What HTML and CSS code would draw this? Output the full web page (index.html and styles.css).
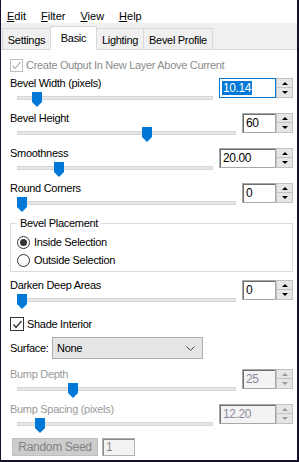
FILE: index.html
```html
<!DOCTYPE html>
<html>
<head>
<meta charset="utf-8">
<link rel="stylesheet" href="styles.css">
</head>
<body>
<div class="win">
  <div class="menubar">
    <span class="mi"><u>E</u>dit</span>
    <span class="mi"><u>F</u>ilter</span>
    <span class="mi"><u>V</u>iew</span>
    <span class="mi"><u>H</u>elp</span>
  </div>
  <div class="tabs">
    <div class="tab t-settings">Settings</div>
    <div class="tab t-basic active">Basic</div>
    <div class="tab t-lighting">Lighting</div>
    <div class="tab t-profile">Bevel Profile</div>
  </div>
  <div class="panel">
    <div class="chkrow top disabled">
      <span class="cb"><svg viewBox="0 0 11 11" width="11" height="11"><polyline points="1.5,5.5 4,8.5 9.5,2" /></svg></span>
      <span>Create Output In New Layer Above Current</span>
    </div>

    <div class="ctl wide">
      <div class="left">
        <div class="lbl">Bevel Width (pixels)</div>
        <div class="slider"><div class="track"></div><svg class="thumb" style="left:15px" viewBox="0 0 10 15" width="10" height="15"><polygon points="0,0 10,0 10,10 5,15 0,10"/></svg></div>
      </div>
      <div class="spin">
        <div class="field focus"><span class="sel">10.14</span></div>
        <div class="btns"><span class="sb"><i class="up"></i></span><span class="sb"><i class="dn"></i></span></div>
      </div>
    </div>

    <div class="ctl narrow">
      <div class="left">
        <div class="lbl">Bevel Height</div>
        <div class="slider"><div class="track"></div><svg class="thumb" style="left:125px" viewBox="0 0 10 15" width="10" height="15"><polygon points="0,0 10,0 10,10 5,15 0,10"/></svg></div>
      </div>
      <div class="spin">
        <div class="field">60</div>
        <div class="btns"><span class="sb"><i class="up"></i></span><span class="sb"><i class="dn"></i></span></div>
      </div>
    </div>

    <div class="ctl wide">
      <div class="left">
        <div class="lbl">Smoothness</div>
        <div class="slider"><div class="track"></div><svg class="thumb" style="left:37px" viewBox="0 0 10 15" width="10" height="15"><polygon points="0,0 10,0 10,10 5,15 0,10"/></svg></div>
      </div>
      <div class="spin">
        <div class="field">20.00</div>
        <div class="btns"><span class="sb"><i class="up"></i></span><span class="sb"><i class="dn"></i></span></div>
      </div>
    </div>

    <div class="ctl narrow">
      <div class="left">
        <div class="lbl">Round Corners</div>
        <div class="slider"><div class="track"></div><svg class="thumb" style="left:0px" viewBox="0 0 10 15" width="10" height="15"><polygon points="0,0 10,0 10,10 5,15 0,10"/></svg></div>
      </div>
      <div class="spin">
        <div class="field">0</div>
        <div class="btns"><span class="sb"><i class="up"></i></span><span class="sb"><i class="dn"></i></span></div>
      </div>
    </div>

    <fieldset class="group">
      <legend>Bevel Placement</legend>
      <div class="radrow"><span class="radio on"></span>Inside Selection</div>
      <div class="radrow"><span class="radio"></span>Outside Selection</div>
    </fieldset>

    <div class="ctl narrow after-group">
      <div class="left">
        <div class="lbl">Darken Deep Areas</div>
        <div class="slider"><div class="track"></div><svg class="thumb" style="left:0px" viewBox="0 0 10 15" width="10" height="15"><polygon points="0,0 10,0 10,10 5,15 0,10"/></svg></div>
      </div>
      <div class="spin">
        <div class="field">0</div>
        <div class="btns"><span class="sb"><i class="up"></i></span><span class="sb"><i class="dn"></i></span></div>
      </div>
    </div>

    <div class="chkrow shade">
      <span class="cb"><svg viewBox="0 0 11 11" width="11" height="11"><polyline points="1.5,5.5 4,8.5 9.5,2" /></svg></span>
      <span>Shade Interior</span>
    </div>

    <div class="surface">
      <span class="slbl">Surface:</span>
      <div class="dropdown"><span>None</span><svg viewBox="0 0 9 5" width="9" height="5"><polyline points="0.5,0.5 4.5,4.5 8.5,0.5"/></svg></div>
    </div>

    <div class="ctl narrow disabled after-surface">
      <div class="left">
        <div class="lbl">Bump Depth</div>
        <div class="slider"><div class="track"></div><svg class="thumb" style="left:51px" viewBox="0 0 10 15" width="10" height="15"><polygon points="0,0 10,0 10,10 5,15 0,10"/></svg></div>
      </div>
      <div class="spin">
        <div class="field">25</div>
        <div class="btns"><span class="sb"><i class="up"></i></span><span class="sb"><i class="dn"></i></span></div>
      </div>
    </div>

    <div class="ctl wide disabled">
      <div class="left">
        <div class="lbl">Bump Spacing (pixels)</div>
        <div class="slider"><div class="track"></div><svg class="thumb" style="left:18px" viewBox="0 0 10 15" width="10" height="15"><polygon points="0,0 10,0 10,10 5,15 0,10"/></svg></div>
      </div>
      <div class="spin">
        <div class="field">12.20</div>
        <div class="btns"><span class="sb"><i class="up"></i></span><span class="sb"><i class="dn"></i></span></div>
      </div>
    </div>

    <div class="seedrow">
      <div class="btn">Random Seed</div>
      <div class="seed">1</div>
    </div>
  </div>
</div>
</body>
</html>
```

FILE: styles.css
```css
html, body {
  margin: 0;
  padding: 0;
  background: #ffffff;
}
body {
  width: 299px;
  height: 462px;
  overflow: hidden;
  font-family: "Liberation Sans", Arial, sans-serif;
  font-size: 11px;
  letter-spacing: -0.3px;
  color: #000;
}
.win {
  box-sizing: border-box;
  width: 299px;
  height: 462px;
  border-left: 1px solid #16102c;
  border-right: 2px solid #16102c;
  border-bottom: 2px solid #16102c;
  display: flex;
  flex-direction: column;
  background: #fff;
}

/* menu */
.menubar {
  height: 23px;
  box-sizing: border-box;
  padding: 10px 0 0 6px;
  display: flex;
  gap: 15px;
  line-height: 13px;
  font-size: 11px;
  letter-spacing: 0;
  background: #fff;
}
.mi u { text-decoration: underline; text-underline-offset: 1px; }

/* tabs */
.tabs {
  height: 26px;
  background: #f0f0f0;
  border-bottom: 1px solid #d9d9d9;
  display: flex;
  align-items: flex-end;
  padding-left: 1px;
}
.tab {
  box-sizing: border-box;
  height: 21px;
  border: 1px solid #d9d9d9;
  border-bottom: none;
  background: #f0f0f0;
  display: flex;
  align-items: center;
  justify-content: center;
  margin-left: -1px;
  position: relative;
  padding-top: 1px;
}
.t-settings { width: 49px; margin-left: 0; }
.t-basic { width: 47px; }
.t-lighting { width: 48px; }
.t-profile { width: 70px; }
.tab.active {
  height: 24px;
  margin-bottom: -1px;
  background: #fff;
  z-index: 1;
  padding-top: 0;
  padding-bottom: 1px;
}

/* panel */
.panel {
  flex: 1;
  background: #fff;
  padding: 6px 3px 0 9px;
  display: flex;
  flex-direction: column;
}

.chkrow {
  height: 18px;
  display: flex;
  align-items: center;
}
.chkrow.disabled { color: #8c8c8c; }
.cb {
  box-sizing: border-box;
  width: 13px;
  height: 13px;
  border: 1px solid #333;
  margin-right: 3px;
  display: flex;
  align-items: center;
  justify-content: center;
  background: #fff;
}
.cb polyline { fill: none; stroke: #333; stroke-width: 1.3; }
.chkrow.disabled .cb { border-color: #bcbcbc; }
.chkrow.disabled .cb polyline { stroke: #bcbcbc; }
.chkrow.shade { margin-top: 1px; }
.chkrow.shade .cb { width: 14px; height: 14px; }

/* slider controls */
.ctl {
  height: 35px;
  display: flex;
}
.ctl.wide:first-of-type { margin-top: 0; }
.chkrow.top + .ctl { margin-top: 3px; }
.ctl .left {
  flex: 1;
  display: flex;
  flex-direction: column;
}
.lbl {
  height: 13px;
  line-height: 13px;
  white-space: nowrap;
}
.slider {
  position: relative;
  height: 15px;
  margin: 2px 6px 0 7px;
}
.track {
  position: absolute;
  left: 0;
  right: 0;
  top: 4px;
  height: 2px;
  background: #e7e7e7;
  border: 1px solid #d6d6d6;
}
.thumb {
  position: absolute;
  top: 0;
  display: block;
}
.thumb polygon { fill: #0078d7; }

.spin {
  display: flex;
  margin-top: 1px;
  height: 20px;
  margin-right: 1px;
}
.field {
  box-sizing: border-box;
  height: 20px;
  border: 1px solid #a7a7a7;
  box-shadow: inset 1px 1px 0 #6e6e6e;
  background: #fff;
  padding: 2px 0 0 3px;
  line-height: 14px;
  font-size: 12px;
  letter-spacing: -0.4px;
}
.wide .field { width: 57px; }
.narrow .field { width: 34px; }
.field.focus {
  border-color: #0078d7;
  box-shadow: none;
}
.sel {
  display: inline-block;
  background: #0078d7;
  color: #fff;
  padding: 0 1px;
  margin-left: -1px;
}
.btns {
  width: 17px;
  display: flex;
  flex-direction: column;
}
.sb {
  box-sizing: border-box;
  height: 10px;
  background: #e6e6e6;
  border: 1px solid #c2c2c2;
  display: flex;
  align-items: center;
  justify-content: center;
}
.sb + .sb { border-top: none; }
.up {
  width: 0;
  height: 0;
  border-left: 3px solid transparent;
  border-right: 3px solid transparent;
  border-bottom: 3px solid #000;
}
.dn {
  width: 0;
  height: 0;
  border-left: 3px solid transparent;
  border-right: 3px solid transparent;
  border-top: 3px solid #000;
}

/* disabled */
.ctl.disabled .lbl { color: #9a9a9a; }
.ctl.disabled .field {
  background: #f3f3f3;
  color: #8a8a9c;
}
.ctl.disabled .up { border-bottom-color: #9a9a9a; }
.ctl.disabled .dn { border-top-color: #9a9a9a; }

/* group */
.group {
  margin: 0 1px 0 0;
  padding: 3px 0 2px 6px;
  border: 1px solid #dcdcdc;
  min-width: 0;
}
.group legend {
  padding: 0 3px;
  line-height: 13px;
}
.radrow {
  height: 18px;
  display: flex;
  align-items: center;
}
.radio {
  box-sizing: border-box;
  width: 13px;
  height: 13px;
  border: 1px solid #333;
  border-radius: 50%;
  margin-right: 4px;
  display: flex;
  align-items: center;
  justify-content: center;
  background: #fff;
}
.radio.on::after {
  content: "";
  width: 7px;
  height: 7px;
  border-radius: 50%;
  background: #333;
}
.ctl.after-group { margin-top: 7px; }

/* surface */
.surface {
  margin-top: 4px;
  height: 22px;
  display: flex;
  align-items: center;
}
.slbl { width: 42px; }
.dropdown {
  box-sizing: border-box;
  width: 151px;
  height: 22px;
  background: #e5e5e5;
  border: 1px solid #adadad;
  display: flex;
  align-items: center;
  justify-content: space-between;
  padding: 0 7px 0 4px;
}
.dropdown polyline { fill: none; stroke: #444; stroke-width: 1; }
.ctl.after-surface { margin-top: 9px; }

/* seed */
.seedrow {
  display: flex;
  align-items: center;
  height: 18px;
  padding-left: 2px;
  gap: 4px;
}
.btn {
  box-sizing: border-box;
  width: 86px;
  height: 18px;
  background: #cccccc;
  border: 1px solid #bfbfbf;
  color: #838383;
  display: flex;
  align-items: center;
  justify-content: center;
  font-size: 12px;
}
.seed {
  box-sizing: border-box;
  width: 33px;
  height: 18px;
  border: 1px solid #b0b0b0;
  box-shadow: inset 1px 1px 0 #8a8a8a;
  background: #f3f3f3;
  color: #8a8a8a;
  padding: 1px 0 0 3px;
  line-height: 14px;
  font-size: 12px;
}
```
